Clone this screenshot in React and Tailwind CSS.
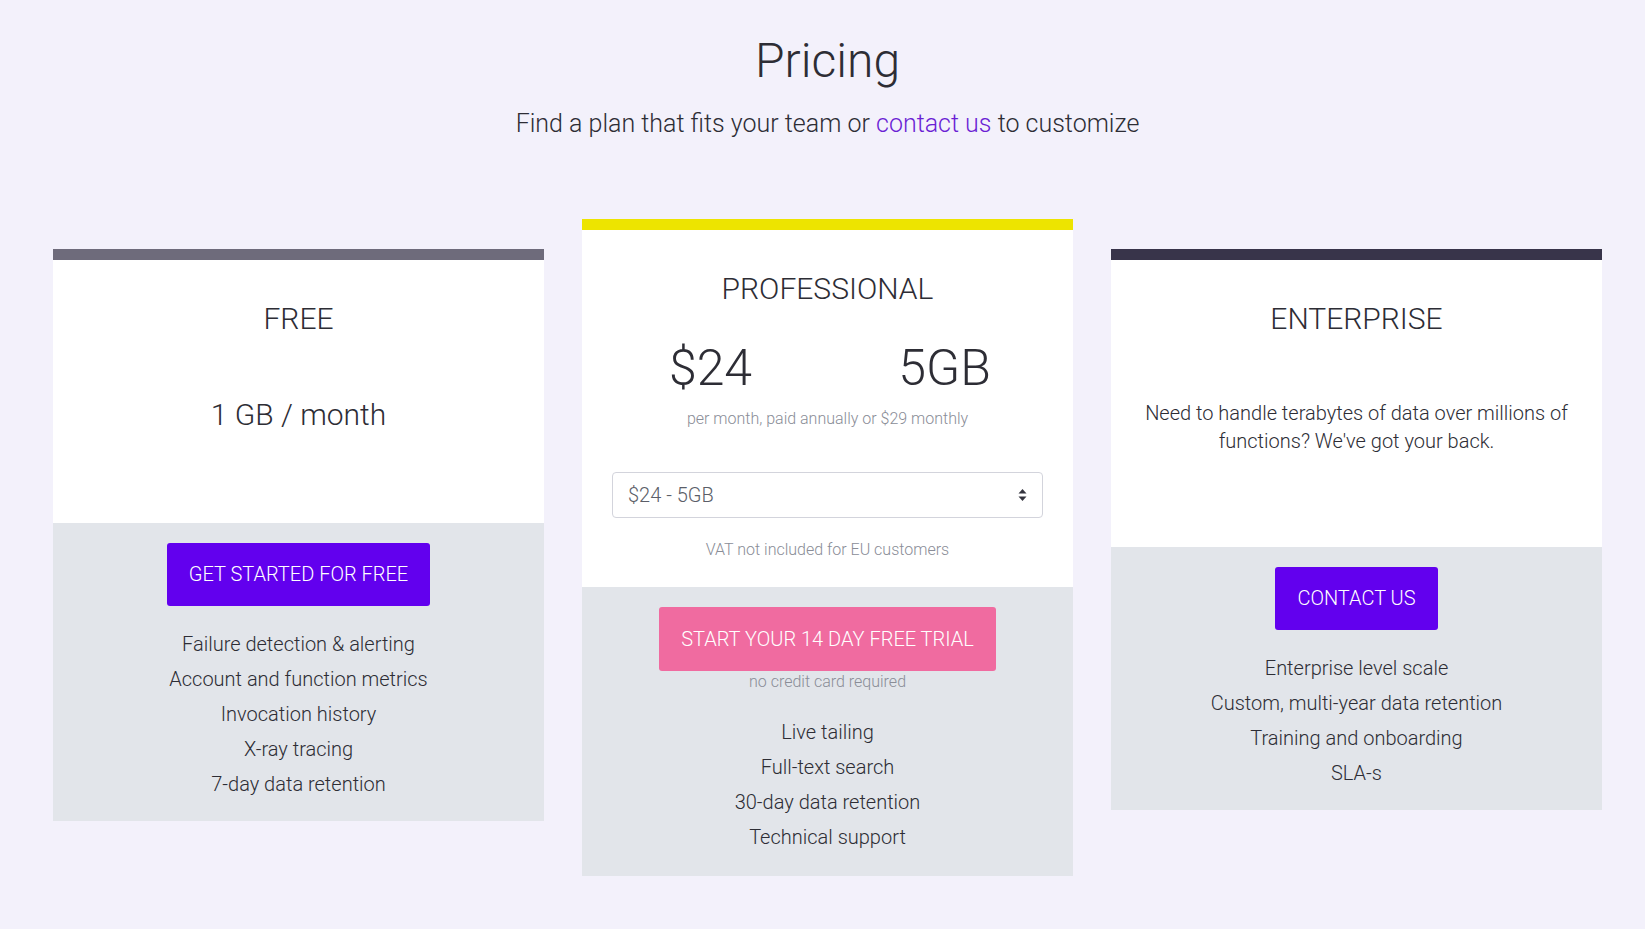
import { useState } from "react"

const plans = {
  free: {
    features: [
      "Failure detection & alerting",
      "Account and function metrics",
      "Invocation history",
      "X-ray tracing",
      "7-day data retention",
    ],
  },
  pro: {
    features: ["Live tailing", "Full-text search", "30-day data retention", "Technical support"],
  },
  enterprise: {
    features: [
      "Enterprise level scale",
      "Custom, multi-year data retention",
      "Training and onboarding",
      "SLA-s",
    ],
  },
}

const tiers = [
  { label: "$24 - 5GB", price: "$24", volume: "5GB" },
  { label: "$49 - 15GB", price: "$49", volume: "15GB" },
  { label: "$99 - 40GB", price: "$99", volume: "40GB" },
]

function FeatureList({ items }) {
  return (
    <ul className="text-[20px] leading-[35px] text-[#2d2d35]">
      {items.map(f => (
        <li key={f}>{f}</li>
      ))}
    </ul>
  )
}

function CardTitle({ children }) {
  return (
    <h2 className="text-[30px] leading-[36px] font-light text-[#2d2d35]">
      {children}
    </h2>
  )
}

export default function App() {
  const [tier, setTier] = useState(0)
  const current = tiers[tier]

  return (
    <div className="min-h-screen bg-[#f3f1fb] font-['Roboto',sans-serif] font-light text-[#2d2d35] pb-10">

      {/* Header */}
      <div className="pt-[32px] pl-[10px] text-center">
        <h1 className="text-[48px] leading-[1.2] font-light text-[#2d2d35]">
          Pricing
        </h1>
        <p className="mt-4 text-[25px] leading-[36px]">
          Find a plan that fits your team or{" "}
          <a href="#" className="text-[#6b1fd4]">contact us</a>{" "}
          to customize
        </p>
      </div>

      {/* Cards */}
      <div className="mt-[77px] ml-[53px] flex items-start gap-[38px]">

        {/* Free */}
        <div className="w-[491px] mt-[30px] text-center">
          <div className="h-[11px] bg-[#6e6b7b]"></div>
          <div className="bg-white pt-[41px] pb-[90px]">
            <CardTitle>FREE</CardTitle>
            <div className="mt-[60px] text-[30px] leading-[36px]">1 GB / month</div>
          </div>
          <div className="bg-[#e2e5ea] pt-[20px] pb-[19px] flex flex-col items-center">
            <button className="h-[63px] px-[22px] rounded-[3px] bg-[#6200ee] text-white text-[20px] font-light">
              GET STARTED FOR FREE
            </button>
            <div className="mt-[21px]">
              <FeatureList items={plans.free.features} />
            </div>
          </div>
        </div>

        {/* Professional */}
        <div className="w-[491px] text-center">
          <div className="h-[11px] bg-[#ede400]"></div>
          <div className="bg-white pt-[41px] pb-[25px] px-[30px]">
            <CardTitle>PROFESSIONAL</CardTitle>
            <div className="mt-[31px] flex justify-center text-[50px] leading-[60px]">
              <div className="w-[234px] shrink-0">{current.price}</div>
              <div className="w-[234px] shrink-0">{current.volume}</div>
            </div>
            <p className="mt-[9px] text-[16px] leading-[24px] text-[#8a8d97]">
              per month, paid annually or $29 monthly
            </p>
            <div className="relative mt-[41px]">
              <select
                value={tier}
                onChange={(e) => setTier(Number(e.target.value))}
                className="appearance-none w-full h-[46px] bg-white border border-[#d3d4dc] rounded-[4px] pl-[15px] pr-8 text-[20px] font-light text-[#5b5e68] outline-none"
              >
                {tiers.map((t, i) => (
                  <option key={t.label} value={i}>{t.label}</option>
                ))}
              </select>
              <svg className="pointer-events-none absolute right-[16px] top-1/2 -translate-y-1/2" width="9" height="13" viewBox="0 0 9 13">
                <path d="M4.5 0.5 L8.5 5 L0.5 5 Z" fill="#33333d" />
                <path d="M4.5 12.5 L8.5 8 L0.5 8 Z" fill="#33333d" />
              </svg>
            </div>
            <p className="mt-[20px] text-[16px] leading-[24px] text-[#8a8d97]">
              VAT not included for EU customers
            </p>
          </div>
          <div className="bg-[#e2e5ea] pt-[20px] pb-[21px] flex flex-col items-center">
            <button className="h-[64px] px-[22px] rounded-[3px] bg-[#f06ba0] text-white text-[20px] font-light">
              START YOUR 14 DAY FREE TRIAL
            </button>
            <p className="text-[16px] leading-[22px] text-[#8a8d97]">no credit card required</p>
            <div className="mt-[22px]">
              <FeatureList items={plans.pro.features} />
            </div>
          </div>
        </div>

        {/* Enterprise */}
        <div className="w-[491px] mt-[30px] text-center">
          <div className="h-[11px] bg-[#38344a]"></div>
          <div className="bg-white pt-[41px] pb-[92px] px-[30px]">
            <CardTitle>ENTERPRISE</CardTitle>
            <p className="mt-[62px] text-[20px] leading-[28px]">
              Need to handle terabytes of data over millions of functions? We've got your back.
            </p>
          </div>
          <div className="bg-[#e2e5ea] pt-[20px] pb-[19px] flex flex-col items-center">
            <button className="h-[63px] px-[22px] rounded-[3px] bg-[#6200ee] text-white text-[20px] font-light">
              CONTACT US
            </button>
            <div className="mt-[21px]">
              <FeatureList items={plans.enterprise.features} />
            </div>
          </div>
        </div>

      </div>
    </div>
  )
}
